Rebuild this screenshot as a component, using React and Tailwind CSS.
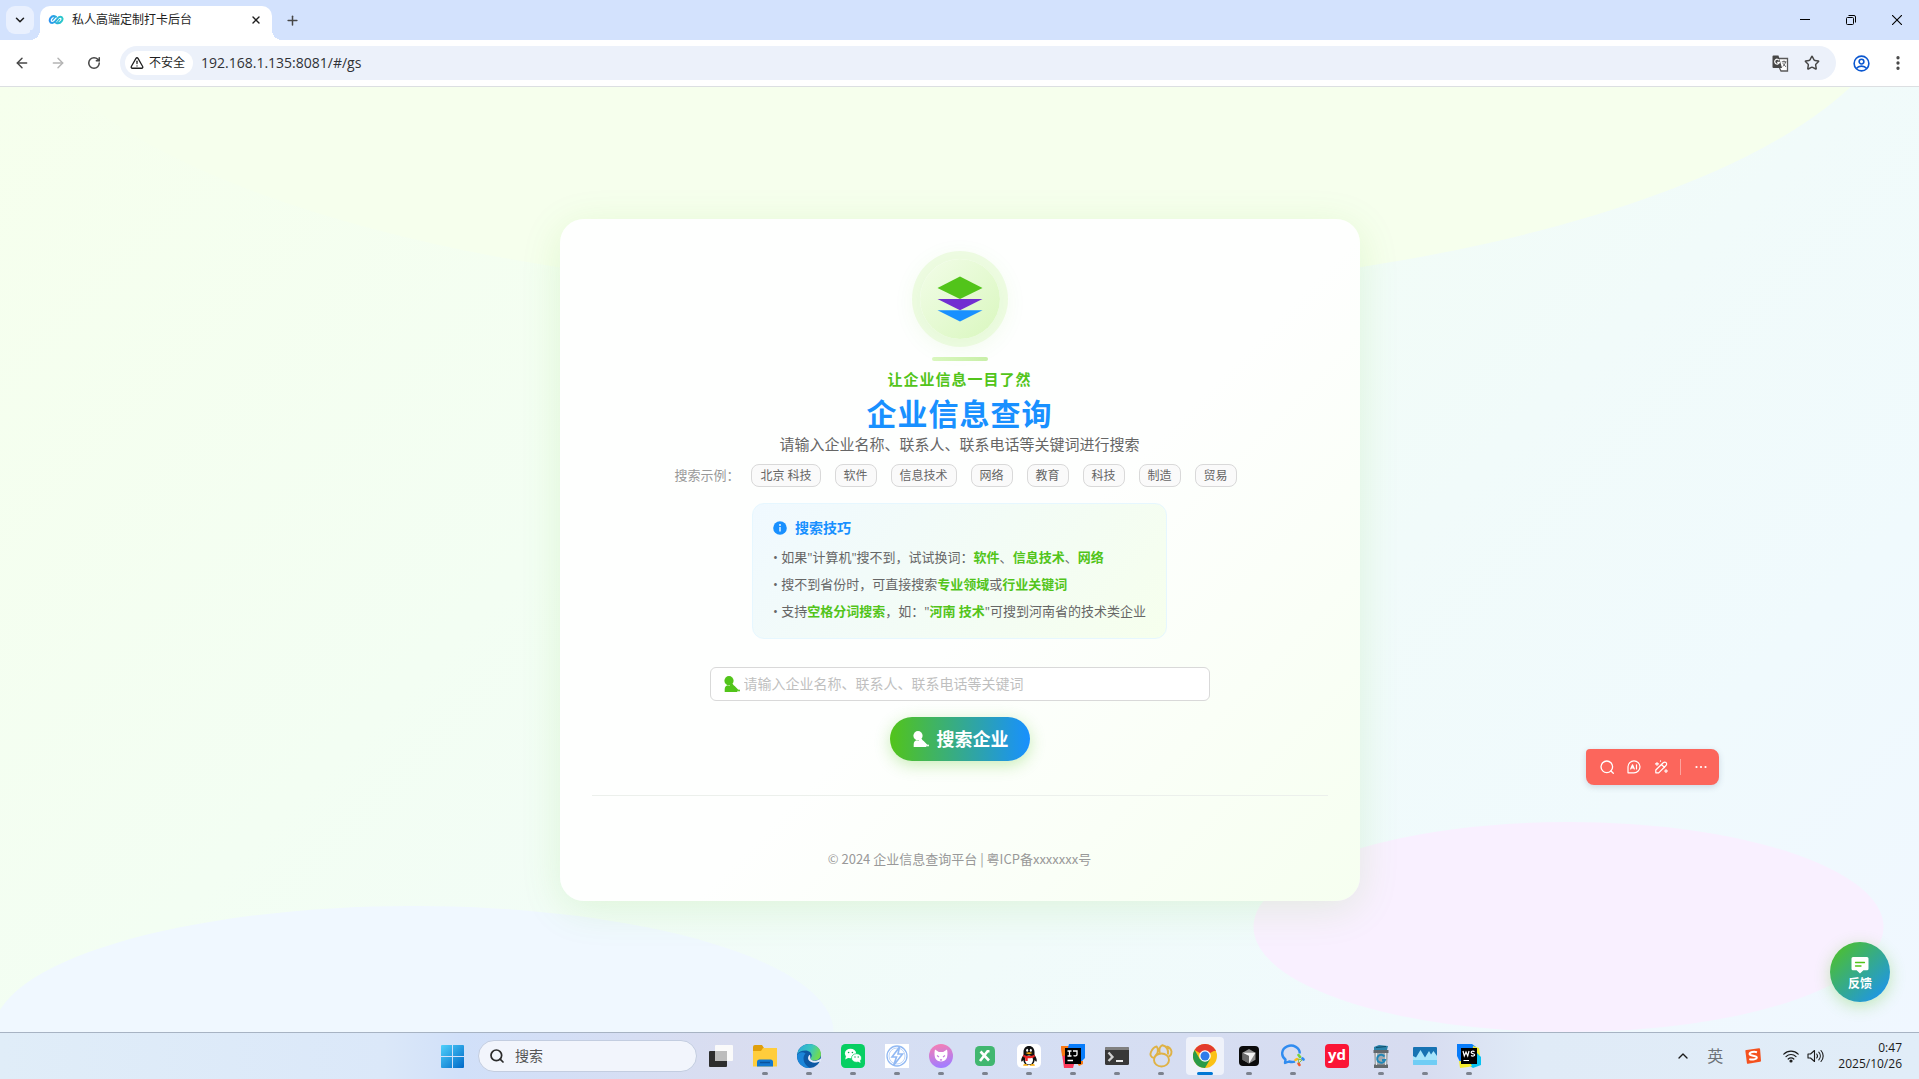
import {
  ArrowLeft, ArrowRight, ChevronDown, ChevronUp, EllipsisVertical, Plus, RotateCw, Search, Star, TriangleAlert, X,
} from "lucide-react";

const examples = ["北京 科技", "软件", "信息技术", "网络", "教育", "科技", "制造", "贸易"];

function Favicon() {
  return (
    <svg viewBox="0 0 16 10" className="h-[10px] w-4 shrink-0" fill="none" strokeWidth="2" strokeLinecap="round">
      <defs>
        <linearGradient id="fav" x1="0" y1="0" x2="16" y2="0" gradientUnits="userSpaceOnUse">
          <stop offset="0" stopColor="#2a8cf5" />
          <stop offset="1" stopColor="#2bd0c4" />
        </linearGradient>
      </defs>
      <path d="M8 1.800C6.500 1 4 1 2.600 2.800 1 5 1.700 8 4.200 8 6.500 8 7.500 6.200 8.700 4.700 9.800 3 10.700 1.800 12.200 1.800c2.400 0 3 2.400 1.500 4.400C12.200 8.300 10 8.600 8.300 8.100" stroke="url(#fav)" />
      <path d="M4.500 5.200 6.800 2.500M9.500 7.200l2.200-2.700" stroke="url(#fav)" strokeWidth="1.200" />
    </svg>
  );
}

function TabStrip() {
  return (
    <div className="flex h-10 items-stretch bg-[#d3e2fd]">
      <button aria-label="搜索标签页" className="mt-[6px] ml-[6px] flex h-7 w-7 items-center justify-center rounded-[9px] bg-[#e9f0fe]">
        <ChevronDown size={14} strokeWidth={2.6} className="text-[#1f1f1f]" />
      </button>
      <div className="relative mt-[6px] ml-[6px] flex w-[232px] items-center rounded-t-[10px] bg-white pr-[9px] pb-[6px] pl-2">
        <span className="absolute bottom-0 -left-[10px] h-[10px] w-[10px] bg-[radial-gradient(circle_at_0_0,#d3e2fd_10px,white_10px)]" />
        <span className="absolute -right-[10px] bottom-0 h-[10px] w-[10px] bg-[radial-gradient(circle_at_100%_0,#d3e2fd_10px,white_10px)]" />
        <Favicon />
        <span className="ml-2 flex-1 text-xs whitespace-nowrap text-[#1f1f1f]">私人高端定制打卡后台</span>
        <button aria-label="关闭标签页" className="flex h-[14px] w-[14px] items-center justify-center">
          <X size={12} strokeWidth={2.8} className="text-[#1f1f1f]" />
        </button>
      </div>
      <button aria-label="新标签页" className="ml-3 flex w-4 items-center justify-center">
        <Plus size={15} strokeWidth={2.4} className="text-[#474747]" />
      </button>
      <div className="ml-auto flex text-black">
        <button aria-label="最小化" className="flex w-[46px] items-center justify-center">
          <svg viewBox="0 0 10 10" className="h-[10px] w-[10px]"><path d="M0 4.500h10" stroke="currentColor" /></svg>
        </button>
        <button aria-label="还原" className="flex w-[46px] items-center justify-center">
          <svg viewBox="0 0 10 10" className="h-[10px] w-[10px]" fill="none" stroke="currentColor">
            <rect x=".5" y="2.500" width="7" height="7" rx="1" />
            <path d="M2.500.500H8A1.500 1.500 0 0 1 9.500 2v5.500" />
          </svg>
        </button>
        <button aria-label="关闭" className="flex w-[45px] items-center justify-center">
          <svg viewBox="0 0 10 10" className="h-[10px] w-[10px]"><path d="M0 0l10 10M10 0 0 10" stroke="currentColor" strokeWidth="1.100" /></svg>
        </button>
      </div>
    </div>
  );
}

function TranslateIcon() {
  return (
    <svg viewBox="0 0 17 17" className="h-[17px] w-[17px]">
      <path d="M7 3.500h8.500v12.500H9L7.500 13" fill="#fff" stroke="#5a5a5a" strokeWidth="1.300" />
      <path d="M1.500.500h5l3.500 12.500H1.500A1 1 0 0 1 .500 12V1.500a1 1 0 0 1 1-1z" fill="#474747" />
      <path d="M7.200 5.400A2.400 2.400 0 1 0 7.400 7.400H5.200" fill="none" stroke="#fff" strokeWidth="1.200" />
      <path d="M9.800 6.800h4.600M12 5.600v1.200M13.500 7c-.4 2-1.500 3.500-2.800 4.500M10.800 8.200l3 3.600" fill="none" stroke="#5a5a5a" />
    </svg>
  );
}

function Toolbar() {
  return (
    <div className="flex h-[47px] items-center border-b border-[#dcdfe2] bg-white pr-3 pl-[13px]">
      <button aria-label="后退" className="flex w-[18px] justify-center"><ArrowLeft size={16} strokeWidth={2.200} className="text-[#474747]" /></button>
      <button aria-label="前进" className="ml-[18px] flex w-[18px] justify-center"><ArrowRight size={16} strokeWidth={2.200} className="text-[#b4b4b4]" /></button>
      <button aria-label="重新加载" className="ml-[18px] flex w-[18px] justify-center"><RotateCw size={14} strokeWidth={2.600} className="text-[#474747]" /></button>
      <div className="ml-[17px] flex h-[34px] flex-1 items-center rounded-full bg-[#ecf1fa] pr-4 pl-[5px]">
        <button className="flex h-6 w-[68px] items-center gap-[5px] rounded-full bg-white pl-[5px] text-xs whitespace-nowrap text-[#1f1f1f]">
          <TriangleAlert size={14} strokeWidth={2.200} />
          不安全
        </button>
        <input
          aria-label="地址"
          defaultValue="192.168.1.135:8081/#/gs"
          className="ml-2 min-w-0 flex-1 bg-transparent text-sm text-[#303236] outline-none"
        />
        <button aria-label="翻译"><TranslateIcon /></button>
        <button aria-label="收藏" className="ml-[15px]"><Star size={16} strokeWidth={2.200} className="text-[#474747]" /></button>
      </div>
      <button aria-label="个人资料" className="ml-[17px]">
        <svg viewBox="0 0 18 18" className="h-[17px] w-[17px]" fill="none" stroke="#0b57d0" strokeWidth="1.700">
          <circle cx="9" cy="9" r="7.800" />
          <circle cx="9" cy="7" r="2.500" />
          <path d="M3.500 14.200c1.500-1.800 3.300-2.400 5.500-2.400s4 .6 5.500 2.400" />
        </svg>
      </button>
      <button aria-label="菜单" className="ml-[19px]"><EllipsisVertical size={18} strokeWidth={2.400} className="text-[#474747]" /></button>
    </div>
  );
}

function UserIcon({ className }) {
  return (
    <svg viewBox="0 0 16 16" className={className} fill="currentColor">
      <circle cx="5" cy="4.700" r="4.600" />
      <path d="M.7 16v-2.800c0-2 1.200-3.500 3-3.900l1.800.5 1.900-2.600 1.400.9c.5 1.300 1.700 1.600 2.600 2.600l2.900 3L13.200 16z" />
      <circle cx="15" cy="14.600" r="1" />
    </svg>
  );
}

function Hot({ children }) {
  return <strong className="font-bold text-[#52c41a]">{children}</strong>;
}

function SearchCard() {
  return (
    <section className="relative mt-[132px] flex w-full max-w-[800px] flex-col items-center rounded-3xl bg-[linear-gradient(135deg,#fefffe_55%,#f6fff0_100%)] px-8 pt-10 pb-8 shadow-[0_8px_40px_rgba(82,196,26,0.13)]">
      <div className="flex h-20 w-20 items-center justify-center rounded-full bg-[linear-gradient(135deg,#f2fde8_0%,#d9f7be_100%)] shadow-[0_0_0_8px_rgba(217,247,190,0.4),0_4px_28px_rgba(82,196,26,0.12)]">
        <svg viewBox="0 0 48 48" className="h-12 w-12">
          <path d="M24 1.500 46.500 13 24 24 1.500 13z" fill="#52c41a" />
          <path d="M1.500 24h45L24 35.200z" fill="#722ed1" />
          <path d="M1.500 35.200h45L24 46.500z" fill="#1890ff" />
        </svg>
      </div>
      <div className="mt-[18px] h-1 w-14 rounded-sm bg-[linear-gradient(90deg,#d9f7be,#c8efa8)]" />
      <p className="mt-[6px] text-[15px] leading-6 font-semibold tracking-[1px] text-[#52c41a]">让企业信息一目了然</p>
      <h1 className="mt-1 text-[30px] leading-[37px] font-bold tracking-[1px] text-[#1890ff]">企业信息查询</h1>
      <p className="text-[15px] leading-6 text-[#666]">请输入企业名称、联系人、联系电话等关键词进行搜索</p>
      <div className="mt-2 flex items-center pr-2">
        <span className="mr-3 text-[13px] whitespace-nowrap text-[#999]">搜索示例：</span>
        <div className="flex gap-[14px]">
          {examples.map((e) => (
            <button key={e} className="flex h-[23px] items-center rounded-lg border border-[#d9d9d9] bg-[#fafafa] px-2 text-xs whitespace-nowrap text-[#666]">{e}</button>
          ))}
        </div>
      </div>
      <div className="mt-4 rounded-xl border border-[#e6f7ff] bg-[linear-gradient(135deg,#f0f9ff_0%,#f6ffed_100%)] px-5 py-4">
        <h2 className="flex h-4 items-center gap-2 text-sm font-bold text-[#1890ff]">
          <svg viewBox="0 0 14 14" className="h-[14px] w-[14px]">
            <circle cx="7" cy="7" r="6.800" fill="#1890ff" />
            <path d="M7 6v4.500" stroke="#fff" strokeWidth="1.300" />
            <circle cx="7" cy="4" r=".9" fill="#fff" />
          </svg>
          搜索技巧
        </h2>
        <ul className="mt-[11px] flex flex-col gap-[6px] text-[13px] leading-[21px] text-[#666]">
          <li>• 如果"计算机"搜不到，试试换词：<Hot>软件</Hot>、<Hot>信息技术</Hot>、<Hot>网络</Hot></li>
          <li>• 搜不到省份时，可直接搜索<Hot>专业领域</Hot>或<Hot>行业关键词</Hot></li>
          <li>• 支持<Hot>空格分词搜索</Hot>，如："<Hot>河南 技术</Hot>"可搜到河南省的技术类企业</li>
        </ul>
      </div>
      <form className="mt-7 flex w-full flex-col items-center" onSubmit={(e) => e.preventDefault()}>
        <label className="flex h-[34px] w-full max-w-[500px] items-center gap-1 rounded-md border border-[#d9d9d9] bg-white px-[13px]">
          <UserIcon className="h-4 w-4 shrink-0 text-[#52c41a]" />
          <input
            aria-label="关键词"
            placeholder="请输入企业名称、联系人、联系电话等关键词"
            className="min-w-0 flex-1 bg-transparent text-sm outline-none placeholder:text-[#bfbfbf]"
          />
        </label>
        <button className="mt-4 flex h-11 items-center gap-2 rounded-full bg-[linear-gradient(90deg,#52c41a_0%,#1890ff_100%)] pr-[21px] pl-[23px] text-lg font-bold text-white shadow-[0_4px_16px_rgba(82,196,26,0.3)]">
          <UserIcon className="h-4 w-4" />
          搜索企业
        </button>
      </form>
      <footer className="mt-[34px] w-full border-t border-[#ecf0ec] pt-[52px] text-center font-['Noto_Sans_CJK_SC',sans-serif] text-[13px] leading-[21px] text-[#999]">
        © 2024 企业信息查询平台 | 粤ICP备xxxxxxx号
      </footer>
    </section>
  );
}

function FloatingTools() {
  return (
    <div className="absolute right-[200px] bottom-[247px] flex h-9 w-[133px] items-center rounded-lg rounded-tl-sm bg-[#fc665c] pl-[14px] text-white shadow-[0_2px_6px_rgba(60,80,120,0.2)]">
      <button aria-label="搜索">
        <svg viewBox="0 0 14 14" className="h-[14px] w-[14px]" fill="none" stroke="currentColor" strokeWidth="1.300" strokeLinecap="round"><circle cx="6.800" cy="6.800" r="5.800" /><path d="M11 11l2.300 2.300" /></svg>
      </button>
      <button aria-label="AI 对话" className="ml-[13px]">
        <svg viewBox="0 0 14 14" className="h-[14px] w-[14px]" fill="none" stroke="currentColor" strokeWidth="1.200" strokeLinejoin="round" strokeLinecap="round">
          <path d="M7 .8a6 6 0 0 1 0 12H1V6.800a6 6 0 0 1 6-6z" />
          <path d="M3.700 9 5.500 4.800 7.300 9M4.400 7.800h2.200M9.500 4.800V9" />
        </svg>
      </button>
      <button aria-label="智能编辑" className="ml-[13px]">
        <svg viewBox="0 0 14 14" className="h-[14px] w-[14px]" fill="none" stroke="currentColor" strokeWidth="1.200" strokeLinecap="round" strokeLinejoin="round">
          <path d="M1.800 12.800V10l7.400-7.200c1-1 2.200-.8 2.900-.1s.8 1.900-.1 2.800l-7.300 7.300zM7.500 4.500l3 3M3 2.500v2.800M1.500 3.900h3M6.500.8v.4M12 9.500v3M10.500 11h3" />
        </svg>
      </button>
      <span className="ml-3 h-4 w-px bg-white/40" />
      <button aria-label="更多" className="ml-[14px]">
        <svg viewBox="0 0 12 4" className="h-1 w-3" fill="currentColor"><circle cx="1.500" cy="2" r="1.100" /><circle cx="6" cy="2" r="1.100" /><circle cx="10.500" cy="2" r="1.100" /></svg>
      </button>
    </div>
  );
}

function Page() {
  return (
    <main className="relative flex flex-1 flex-col items-center overflow-hidden bg-[linear-gradient(135deg,#f6ffed_0%,#f3fef3_35%,#f1fbfa_65%,#f0fafd_82%,#f0f7ff_100%)]">
      <svg aria-hidden="true" viewBox="0 0 1440 900" className="absolute inset-0 h-full w-full">
        <ellipse cx="720" cy="-100" rx="900" ry="300" fill="#f6ffed" />
        <ellipse cx="200" cy="900" rx="400" ry="120" fill="#f0f8ff" />
        <ellipse cx="1300" cy="800" rx="300" ry="100" fill="#f9f0ff" />
      </svg>
      <SearchCard />
      <FloatingTools />
      <button className="absolute right-[29px] bottom-[30px] flex h-[60px] w-[60px] flex-col items-center justify-center gap-px rounded-full bg-[linear-gradient(135deg,#52c41a_0%,#1890ff_100%)] pt-1 text-xs leading-[18px] font-bold text-white shadow-[0_4px_16px_rgba(82,196,26,0.3)]">
        <svg viewBox="0 0 18 18" className="h-[18px] w-[18px]">
          <path d="M2 1h14a1.500 1.500 0 0 1 1.500 1.500v10.200a1.500 1.500 0 0 1-1.500 1.500h-3.600L9 17.500l-3.400-3.300H2A1.500 1.500 0 0 1 .5 12.700V2.500A1.500 1.500 0 0 1 2 1z" fill="#fff" />
          <path d="M4.500 6.500h9M4.500 10h5.500" stroke="#52c41a" strokeWidth="1.300" strokeLinecap="round" />
        </svg>
        反馈
      </button>
    </main>
  );
}

const I = ({ children }) => <svg viewBox="0 0 24 24" className="h-6 w-6">{children}</svg>;

const apps = [
  { name: "任务视图", off: true, icon: <I>
    <rect x="0" y="7" width="18" height="16" rx="1" fill="#2d2d2d" />
    <rect x="6" y="1" width="18" height="16" rx="1" fill="#fafafa" />
    <path d="M6 7h12v10H7a1 1 0 0 1-1-1z" fill="#bcbcbc" />
  </I> },
  { name: "文件资源管理器", icon: <I>
    <path d="M0 3a2 2 0 0 1 2-2h7l2 3h12a1 1 0 0 1 1 1v6H0z" fill="#e09f0b" />
    <path d="M0 7h8l2-3h14v18.500H0z" fill="#ffcd3c" />
    <path d="M4 22.500V18a2.500 2.500 0 0 1 2.500-2.500h11A2.500 2.500 0 0 1 20 18v4.500z" fill="#1278d0" />
    <path d="M7 18.500h10" stroke="#0a529b" strokeWidth="1.500" />
  </I> },
  { name: "Edge", icon: <I>
    <defs><linearGradient id="edge" x1="0" y1="0" x2="1" y2=".3"><stop offset="0" stopColor="#2aa7dd" /><stop offset=".6" stopColor="#39c6c0" /><stop offset="1" stopColor="#6edb55" /></linearGradient></defs>
    <circle cx="12" cy="12" r="12" fill="#0c59a4" />
    <path d="M.2 10.500C1.200 4.200 6 0 12 0c7 0 12 4.700 12 10.300 0 3.700-2.700 6.200-6.300 6.200-3 0-4.200-1-4-2.100.2-.8 1-1.200 1-2.800 0-2.500-2.500-5-6.300-5C4.500 6.600 1.500 8.200.2 10.500z" fill="url(#edge)" />
    <path d="M8.600 9.500C5.500 12 5.800 18.500 10 22c.7.700 2 1.500 3 1.900C5.500 24.500-.4 18.500.1 11.200 1.700 7.800 6 7.500 8.600 9.500z" fill="#1b86d9" />
    <path d="M13.700 15.200c.6 1.500 5 2.400 8.700.2l1.600-1v3l-2.500.6c-4 1.500-9 .4-10.300-2.800-.5-1.700.2-3.600 1.700-4.500.8 1.500 0 2.500.8 4.500z" fill="#e3ebf8" />
  </I> },
  { name: "微信", icon: <I>
    <rect width="24" height="24" rx="4.500" fill="#07cf62" />
    <ellipse cx="9.500" cy="9.500" rx="5.600" ry="4.800" fill="#fff" /><path d="M5 12l-.8 3.500L8 13.500z" fill="#fff" />
    <ellipse cx="15.500" cy="14" rx="5" ry="4.300" fill="#fff" stroke="#07cf62" strokeWidth=".7" /><path d="M17 17.500l2.500 1.600-.5-3z" fill="#fff" />
    <g fill="#07a94f"><circle cx="7.600" cy="8.500" r=".8" /><circle cx="11.400" cy="8.500" r=".8" /><circle cx="14" cy="13" r=".7" /><circle cx="17.200" cy="13" r=".7" /></g>
  </I> },
  { name: "闪电", icon: <I>
    <rect width="24" height="24" fill="#fff" />
    <g fill="none" stroke="#92b9f3" strokeWidth="1.300"><circle cx="12" cy="12" r="10" /><circle cx="12" cy="12" r="8" strokeWidth=".6" /><path d="M14.500 3 7 13h4.500L8.500 21.500 17.500 10H13z" fill="#fff" strokeWidth="1.600" /></g>
  </I> },
  { name: "猫", icon: <I>
    <defs><linearGradient id="cat" x1="0" y1="0" x2=".2" y2="1"><stop stopColor="#fb7fae" /><stop offset="1" stopColor="#a47cff" /></linearGradient></defs>
    <circle cx="12" cy="12" r="12" fill="url(#cat)" />
    <path d="M6 5.500 9.800 8h4.400L18 5.500c.7 2.500.6 5.500 0 8-.8 2.600-3.300 4-6 4s-5.200-1.400-6-4c-.6-2.500-.7-5.500 0-8z" fill="#fff" />
    <path d="M8 11.500l2 1.500M16 11.500 14 13M11 15.500l1 .8 1-.8" stroke="#c67be0" strokeWidth="1.100" fill="none" />
  </I> },
  { name: "Xshell", icon: <I>
    <rect x="2" y="2" width="20" height="20" rx="4.500" fill="#41b770" />
    <path d="M7.500 7.500l8.500 9M16.500 7.200h-2L7 17" stroke="#fff" strokeWidth="2.600" fill="none" />
  </I> },
  { name: "QQ", icon: <I>
    <rect width="24" height="24" rx="5" fill="#fff" />
    <path d="M12 2c-3.500 0-5.500 2.700-5.500 6v3C5 13 3.800 15.500 4.300 17.500c.6.500 1.500-.7 2-1.500.5 4 2.500 5 5.700 5s5.200-1 5.700-5c.5.800 1.400 2 2 1.500.5-2-.7-4.500-2.200-6.500V8c0-3.300-2-6-5.500-6z" fill="#111" />
    <ellipse cx="12" cy="16" rx="4" ry="4.500" fill="#fff" />
    <path d="M6.300 10.500c3.500 2 8 2 11.400 0v2.500c-2 1-4.500 1.500-7 1.300V17H8.300v-3.300l-2-.8z" fill="#ee2626" />
    <ellipse cx="10.200" cy="6.200" rx="1" ry="1.500" fill="#fff" /><ellipse cx="13.800" cy="6.200" rx="1" ry="1.500" fill="#fff" />
    <path d="M8.500 9c2-1 5-1 7 0-2 1.500-5 1.500-7 0zM6 21c1.500-1.500 4-1 5.500.7H6.500zM18 21c-1.500-1.500-4-1-5.500.7h5z" fill="#faab07" />
  </I> },
  { name: "IntelliJ IDEA", icon: <I>
    <path d="M0 3l8-1 8 8-4 14H3z" fill="#fc3a5c" /><path d="M0 2h7v9L1 12z" fill="#f97a12" />
    <path d="M8 0h16v14l-5 5L6 8z" fill="#087cfa" /><path d="M15 17h7v3l-4 2z" fill="#f97a12" />
    <rect x="4" y="4" width="16" height="16" fill="#000" />
    <path d="M6.500 7h4M8.500 7v5M6.500 12h4M12 7h4v3.500c0 1.500-2 1.800-3.500 1M6.500 16.500H12" stroke="#fff" strokeWidth="1.300" fill="none" />
  </I> },
  { name: "终端", icon: <I>
    <rect x="0" y="3" width="24" height="18" rx="1.500" fill="#383838" /><path d="M1.500 3h21A1.500 1.500 0 0 1 24 4.500V6H0V4.500A1.500 1.500 0 0 1 1.500 3z" fill="#808080" />
    <path d="M3.500 8.500 7.500 13l-4 4" stroke="#d0d0d0" strokeWidth="2.300" fill="none" /><path d="M11 17h7" stroke="#fff" strokeWidth="1.800" />
  </I> },
  { name: "Navicat", icon: <I>
    <g fill="none" stroke="#dfb245" strokeWidth="1.900" strokeLinejoin="round">
      <ellipse cx="12.500" cy="16" rx="7.500" ry="6.500" />
      <path d="M5 14C1.500 13 .8 10.500 2 8c1.200-2.800 3-5 5.500-5.500C9 4 9.200 6.500 8.300 9.200L5.500 13M10.800 9C9.800 5.500 11 2.500 13.500 1.200c3.800.8 6 4.300 5.500 9.300M19.500 12.500c2-.5 3-2.500 3-5-.5-2.500-2.500-4.300-5-5" />
    </g>
  </I> },
  { name: "Chrome", active: true, icon: <I>
    <circle cx="12" cy="12" r="12" fill="#fbc116" />
    <path d="M12 12 1.600 6A12 12 0 0 1 22.400 6z" fill="#e33b2e" /><path d="M1.600 6h20.800H12z" fill="#e33b2e" />
    <path d="M12 12 6.800 15 1.600 6A12 12 0 0 0 12 24l5.200-9z" fill="#2a9b48" />
    <path d="M12 6.500h10.700" stroke="#e33b2e" strokeWidth="1" />
    <circle cx="12" cy="12" r="5.800" fill="#fff" /><circle cx="12" cy="12" r="4.500" fill="#2f7bea" />
  </I> },
  { name: "Cursor", icon: <I>
    <rect x="2" y="2" width="20" height="20" rx="4" fill="#0b0b0b" />
    <path d="M12 5l6.500 3.700v7L12 19.500l-6.500-3.800v-7z" fill="#8e8e8e" /><path d="M5.500 8.700h13L12 19.500V12z" fill="#f2f2f2" /><path d="M5.500 8.700 12 12v7.500l-6.500-3.800z" fill="#6a6a6a" />
  </I> },
  { name: "企业微信", icon: <I>
    <path d="M18.800 9.500A8.800 7.800 0 1 0 4.500 15.500L4 19l4-1.500c2 .7 4 .7 6 .1" fill="none" stroke="#308cf0" strokeWidth="2.400" strokeLinejoin="round" />
    <g strokeWidth="2.600" strokeLinecap="round"><path d="M17.500 11l1.500 2" stroke="#78d13d" /><path d="M21.500 14.500l1 1" stroke="#2f8df0" /><path d="M17.500 19.500l1 1.500" stroke="#f25a2c" /><path d="M14.500 16l1.500-1" stroke="#fbbe17" /></g>
    <path d="M17 15l4 1-3 3z" fill="none" stroke="#8dbb4a" strokeWidth="1" />
  </I> },
  { name: "有道", off: true, icon: <span className="flex h-6 w-6 items-center justify-center rounded-[4px] bg-[#fb1636] pb-[3px] text-[15px] leading-none font-bold text-white">yd</span> },
  { name: "回收工具", icon: <I>
    <path d="M5 3l5-2 9 1-1 4H5z" fill="#2b83aa" /><path d="M7 3.500l10-1" stroke="#0d4966" strokeWidth="1.200" />
    <path d="M5 7h14l-.8 16H5.800z" fill="#a4a9ad" /><path d="M4.500 6h15v3h-15zM5 20.500h14V24H5z" fill="#62686c" /><path d="M7.500 9v12M16.500 9v12" stroke="#e1e4e6" />
    <path d="M15.500 12.500a4 4 0 1 0 .5 3.500h-3" fill="none" stroke="#2187b7" strokeWidth="2" />
  </I> },
  { name: "性能监视", icon: <I>
    <rect y="3" width="24" height="18" rx="1" fill="#1773b3" /><path d="M0 12l3 1.500L7.500 6 12 13.500 16 7l2 3.500L20.500 7 24 12v8a1 1 0 0 1-1 1H1a1 1 0 0 1-1-1z" fill="#a6e4fb" /><path d="M0 16h24v4a1 1 0 0 1-1 1H1a1 1 0 0 1-1-1z" fill="#70cdf5" />
  </I> },
  { name: "WebStorm", icon: <I>
    <path d="M0 0h15l4 3-7 12L3 18 0 12z" fill="#087cfa" /><path d="M16 2l6 2 1 7-8 3z" fill="#f5ec2e" /><path d="M20 9l4 4v8l-8 3-6-4z" fill="#07c3f2" /><path d="M2 17h10l3 5-4 1-8 1z" fill="#f5ec2e" />
    <rect x="4" y="4" width="16" height="16" fill="#000" />
    <path d="M6 7l1.300 5L9 8l1.700 4L12 7M17.500 7.700c-1.500-1.200-3.700-.3-3.200 1s3 .8 3.300 2-2 2-3.600.8M6.500 16.500H12" stroke="#fff" strokeWidth="1.200" fill="none" />
  </I> },
];

function Taskbar() {
  return (
    <footer className="grid h-[47px] shrink-0 grid-cols-[1fr_auto_1fr] border-t border-[#a7b3c3] bg-[linear-gradient(90deg,#e0edf8_0%,#dbe8f9_20%,#d1e0f9_24%,#d9ddf0_38%,#d5dff4_50%,#d7dcf0_74%,#e0ebf7_80%,#e1edf8_100%)]">
      <nav className="col-start-2 flex items-center pl-[2px]">
        <button aria-label="开始" className="flex w-11 justify-center">
          <svg viewBox="0 0 23 23" className="h-[23px] w-[23px]">
            <defs><linearGradient id="win" x1="0" y1="0" x2="23" y2="23" gradientUnits="userSpaceOnUse"><stop stopColor="#4fd0fb" /><stop offset="1" stopColor="#0069c8" /></linearGradient></defs>
            <path d="M0 1a1 1 0 0 1 1-1h10v11H0zM12 0h10a1 1 0 0 1 1 1v10H12zM0 12h11v11H1a1 1 0 0 1-1-1zM12 12h11v10a1 1 0 0 1-1 1H12z" fill="url(#win)" />
          </svg>
        </button>
        <label className="mr-[2px] ml-1 flex h-8 w-[219px] items-center gap-[10px] rounded-full border border-[#c3cde0] bg-[#f2f5fc] px-[10px]">
          <Search size={16} strokeWidth={2.600} className="shrink-0 text-[#2b2b2b]" />
          <input aria-label="搜索" placeholder="搜索" className="w-full min-w-0 bg-transparent text-sm outline-none placeholder:text-[#555]" />
        </label>
        {apps.map((a) => (
          <button key={a.name} aria-label={a.name} className="flex w-11 justify-center">
            <span className={a.active
              ? "relative flex h-[38px] w-[38px] items-center justify-center rounded bg-[#eff2fa]"
              : "relative flex h-[38px] w-[38px] items-center justify-center"}>
              {a.icon}
              {!a.off && (
                <span className={a.active
                  ? "absolute bottom-0 h-[3px] w-4 rounded-full bg-[#0078d4]"
                  : "absolute bottom-0 h-[3px] w-[6px] rounded-full bg-[#7c828e]"} />
              )}
            </span>
          </button>
        ))}
      </nav>
      <div className="flex items-center justify-end pr-[17px] text-[#1b1b1b]">
        <button aria-label="显示隐藏的图标"><ChevronUp size={16} strokeWidth={2} /></button>
        <span className="ml-4 text-base text-[#6d7278]">英</span>
        <svg viewBox="0 0 16 16" className="ml-[22px] h-4 w-4">
          <path d="M1.500 2 14 .3a1 1 0 0 1 1.100.9l.9 11.500a1 1 0 0 1-.9 1.100L3 15.800a1 1 0 0 1-1.100-.9L.4 3.200A1 1 0 0 1 1.500 2z" fill="#f4511e" />
          <path d="M12 4.200C9 3.300 4.500 4 4.600 6.200c.2 2 7 1 7.200 3.200.1 2-4.500 2.700-7.500 1.700" fill="none" stroke="#fff" strokeWidth="2" />
        </svg>
        <svg viewBox="0 0 16 16" className="ml-[22px] h-4 w-4" fill="none" stroke="currentColor" strokeWidth="1.200" strokeLinecap="round">
          <path d="M.8 6.200c4-4 10.400-4 14.400 0M3 8.600c2.800-2.800 7.200-2.800 10 0M5.200 11c1.600-1.600 4-1.600 5.600 0" /><circle cx="8" cy="13" r="1" fill="currentColor" />
        </svg>
        <svg viewBox="0 0 17 16" className="ml-2 h-4 w-[17px]" fill="none" stroke="currentColor" strokeWidth="1.100" strokeLinejoin="round" strokeLinecap="round">
          <path d="M1 6h2.500L7.500 2.500v11L3.500 10H1zM9.700 6c1 1.200 1 2.800 0 4M11.800 4.200c2 2.200 2 5.400 0 7.600M14 2.500c2.900 3.200 2.900 7.800 0 11" />
        </svg>
        <div className="ml-[14px] text-right text-xs leading-4">
          <div>0:47</div>
          <div>2025/10/26</div>
        </div>
      </div>
    </footer>
  );
}

export default function App() {
  return (
    <div className="flex min-h-screen flex-col font-['Open_Sans','Noto_Sans_CJK_SC',sans-serif]">
      <header>
        <TabStrip />
        <Toolbar />
      </header>
      <Page />
      <Taskbar />
    </div>
  );
}
